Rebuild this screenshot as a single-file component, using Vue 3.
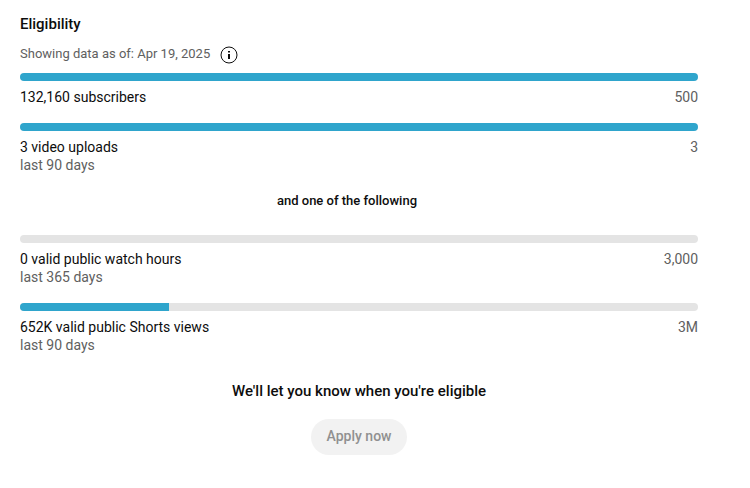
<script setup>
import { ref } from "vue";

const asOf = ref("Apr 19, 2025");

const required = ref([
  { id: 1, label: "132,160 subscribers", period: "", goal: "500", percent: 100 },
  { id: 2, label: "3 video uploads", period: "last 90 days", goal: "3", percent: 100 },
]);

const oneOf = ref([
  { id: 3, label: "0 valid public watch hours", period: "last 365 days", goal: "3,000", percent: 0 },
  { id: 4, label: "652K valid public Shorts views", period: "last 90 days", goal: "3M", percent: 22 },
]);
</script>

<template>
  <div class="eligibility">
    <h2 class="title">Eligibility</h2>
    <div class="as-of">
      <span>Showing data as of: {{ asOf }}</span>
      <svg class="info" viewBox="0 0 18 18" width="18" height="18">
        <circle cx="9" cy="9" r="8" />
        <path d="M9 8v5M9 5v1.6" />
      </svg>
    </div>

    <div v-for="item in required" :key="item.id" class="goal">
      <div class="bar">
        <div class="fill" :style="{ width: item.percent + '%' }"></div>
      </div>
      <div class="row">
        <span class="label">{{ item.label }}</span>
        <span class="count">{{ item.goal }}</span>
      </div>
      <div v-if="item.period" class="period">{{ item.period }}</div>
    </div>

    <p class="divider">and one of the following</p>

    <div v-for="item in oneOf" :key="item.id" class="goal">
      <div class="bar">
        <div class="fill" :style="{ width: item.percent + '%' }"></div>
      </div>
      <div class="row">
        <span class="label">{{ item.label }}</span>
        <span class="count">{{ item.goal }}</span>
      </div>
      <div v-if="item.period" class="period">{{ item.period }}</div>
    </div>

    <div class="apply">
      <p class="notice">We'll let you know when you're eligible</p>
      <button class="apply-btn" disabled>Apply now</button>
    </div>
  </div>
</template>

<style>
body {
  background: #fff;
}
</style>

<style scoped>
.eligibility {
  width: 678px;
  padding: 12px 0 0 20px;
  font-family: Roboto, "Liberation Sans", sans-serif;
  font-size: 14px;
  line-height: 18px;
  color: #0d0d0d;
}
.title {
  margin: 0;
  font-size: 15px;
  font-weight: 500;
  line-height: 24px;
}
.as-of {
  display: flex;
  align-items: center;
  gap: 10px;
  height: 24px;
  margin: 6px 0 7px;
  font-size: 13px;
  color: #606060;
}
.info {
  margin-top: 2px;
  fill: none;
  stroke: #0d0d0d;
  stroke-width: 1;
}
.info path {
  stroke-width: 2;
}
.goal {
  margin-bottom: 17px;
}
.bar {
  height: 8px;
  margin-bottom: 7px;
  border-radius: 4px;
  background: #e4e4e4;
  overflow: hidden;
}
.fill {
  height: 100%;
  background: #2fa5cc;
}
.row {
  display: flex;
  justify-content: space-between;
}
.count,
.period {
  color: #606060;
}
.divider {
  width: 654px;
  margin: 18px 0 25px;
  font-size: 13px;
  font-weight: 500;
  text-align: center;
}
.apply {
  display: flex;
  flex-direction: column;
  align-items: center;
}
.notice {
  margin: 11px 0 19px;
  font-size: 15px;
  font-weight: 500;
}
.apply-btn {
  width: 96px;
  height: 36px;
  padding: 0 0 2px;
  border: none;
  border-radius: 18px;
  background: #f2f2f2;
  color: #909090;
  font-family: inherit;
  font-size: 14px;
  font-weight: 500;
}
</style>
